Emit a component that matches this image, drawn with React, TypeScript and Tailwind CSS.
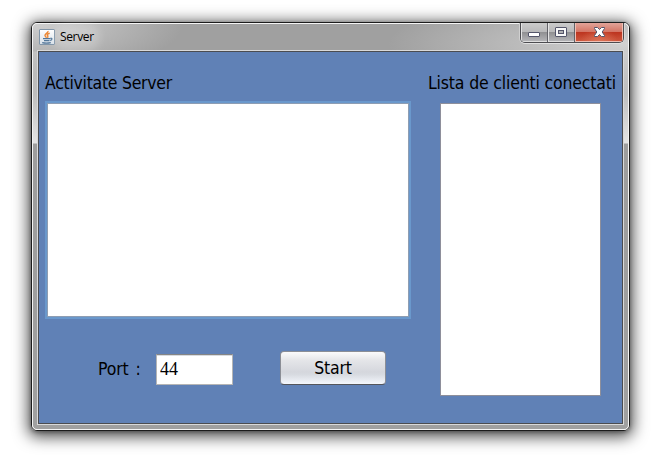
import React from "react";

const UI = "font-['DejaVu_Sans_Condensed','DejaVu_Sans',sans-serif] [font-stretch:condensed]";

function JavaIcon() {
  return (
    <svg width="16" height="16" viewBox="0 0 16 16" className="block shrink-0">
      <defs>
        <linearGradient id="tile" x1="0" y1="0" x2="0" y2="1">
          <stop offset="0" stopColor="#ffffff" />
          <stop offset="1" stopColor="#d7e0e9" />
        </linearGradient>
      </defs>
      <rect x=".5" y=".5" width="15" height="15" rx=".5" fill="url(#tile)" stroke="#8195a8" />
      <path d="M9 2C9.800 4 4.800 5 6.200 7.200L7.600 8.800M10.700 4.300C8 5 7.800 6 8.900 7L8.600 8.800" fill="none" stroke="#ed8733" strokeWidth="1.400" />
      <path d="M4 9.700h7.200M5 11.600h5.500M3.200 13.600c2.500.6 6 .6 8.600 0M11.300 9.300c2.200-.5 2.200 1.700-.1 2.300" fill="none" stroke="#54789a" strokeWidth="1.200" />
    </svg>
  );
}

function TitleButtons() {
  return (
    <div className="-mt-px flex h-[20px] w-[104px] overflow-hidden rounded-b-[5px] border border-t-0 border-[#4c4c50] shadow-[0_1px_0_#e2e2e2,1px_0_0_#d8d8d8,-1px_0_0_#d0d0d0]">
      <div className="flex w-[27px] items-start justify-center border-r border-[#626268] bg-[linear-gradient(#cbcbcb_0%,#b9b9ba_47%,#919193_50%,#b7b7ba_100%)] pt-[9px] shadow-[inset_1px_0_0_#e4e4e4,inset_0_-1px_0_#dedede]">
        <svg width="12" height="5" viewBox="0 0 12 5">
          <rect x=".5" y=".5" width="11" height="4" rx=".5" fill="#fff" stroke="#54556a" />
        </svg>
      </div>
      <div className="flex w-[27px] items-start justify-center border-r border-[#626268] bg-[linear-gradient(#cbcbcb_0%,#b9b9ba_47%,#919193_50%,#b7b7ba_100%)] pt-[4px] shadow-[inset_1px_0_0_#e4e4e4,inset_0_-1px_0_#dedede]">
        <svg width="12" height="10" viewBox="0 0 12 10">
          <rect x=".5" y=".5" width="11" height="9" rx=".5" fill="#f8f8f8" stroke="#54556a" />
          <rect x="3.500" y="3.500" width="5" height="3" fill="#b0b0b3" stroke="#54556a" />
        </svg>
      </div>
      <div className="flex flex-1 items-start justify-center bg-[radial-gradient(ellipse_at_50%_100%,#e88b6d99_0%,transparent_55%),linear-gradient(#e2a499_0%,#d47666_45%,#bd3520_50%,#cf5a40_100%)] pt-[4px] shadow-[inset_1px_0_0_#efc0b5,inset_-1px_0_0_#efc0b5,inset_0_-1px_0_#efc0b5]">
        <svg width="13" height="10" viewBox="0 0 13 10">
          <path d="M1.500 .5h3l2 2 2-2h3v1L9.200 5l2.300 3.500v1h-3l-2-2-2 2h-3v-1L3.800 5 1.500 1.500z" fill="#fff" stroke="#54556a" strokeLinejoin="round" />
        </svg>
      </div>
    </div>
  );
}

export default function App() {
  return (
    <div className="h-[459px] w-[665px] overflow-hidden bg-white pl-[31px] pt-[22px] text-black">
      <div className="h-[409px] w-[599px] rounded-[6px] border border-[#1c1c1c] shadow-[0_3px_15px_3px_rgba(0,0,0,0.68),0_1px_4px_rgba(0,0,0,0.35)]">
        <div className="flex h-full flex-col rounded-[5px] border border-[#f4f4f4] bg-[radial-gradient(ellipse_150px_50px_at_0_0,#cfcfcf_0%,#c4c4c400_100%),radial-gradient(ellipse_240px_50px_at_100%_20px,#d2d2d2_0%,#c4c4c400_100%),linear-gradient(#a0a0a0_0px,#a0a0a0_27px,#b8b8b8_28px,#bebebe_70px,#e4e4e4_119px,#9d9d9d_120px,#a0a0a0_100%)] px-1 pb-1">
          <header className="flex h-[26px] shrink-0 justify-between pl-[2px]">
            <div className="flex h-[26px] items-center gap-[5px]">
              <JavaIcon />
              <span className="rounded-full bg-white/20 font-['Open_Sans','Noto_Sans',sans-serif] text-[12px] leading-[16px] tracking-[-0.35px] shadow-[0_0_8px_6px_rgba(255,255,255,0.2)]">Server</span>
            </div>
            <TitleButtons />
          </header>
          <div className="min-h-0 flex-1 border border-[#d9d9d9]">
            <main className={`flex h-full border border-[#4b4c50] bg-[#6081b6] ${UI}`}>
              <section className="w-[389px] shrink-0 pl-[6px] pt-[19px]">
                <h1 className="h-[30px] whitespace-nowrap text-[17.500px] leading-[24px] tracking-[-0.280px]">Activitate Server</h1>
                <div className="h-[218px] w-[366px] border-2 border-[#6a98cc] bg-white">
                  <div className="h-full border border-[#8e9db2]" />
                </div>
                <div className="mt-[32px] flex">
                  <label htmlFor="port" className="ml-[53px] w-[58px] whitespace-nowrap pt-[6px] text-[17.500px] leading-[24px] tracking-[-0.150px] [word-spacing:2px]">Port :</label>
                  <input id="port" defaultValue="44" className="mt-[3px] h-[31px] w-[77px] border border-[#b5b5b5] border-t-[#858585] bg-white px-[3px] pb-0 font-['Liberation_Serif',serif] text-[18px] shadow-[inset_0_1px_0_#d8dbe0] outline-none" />
                  <button className="ml-[47px] h-[34px] w-[106px] rounded-[4px] border border-[#8b8e96] border-b-[#54565c] bg-[linear-gradient(#fbfbfc_0%,#e5e6e9_25%,#d5d7dd_62%,#d7dae0_70%,#f4f7fd_100%)] text-[17.500px] leading-[32px] tracking-[-0.150px]">Start</button>
                </div>
              </section>
              <section className="pt-[19px]">
                <h2 className="h-[32px] whitespace-nowrap text-[17.500px] leading-[24px] tracking-[-0.170px]">Lista de clienti conectati</h2>
                <div className="ml-[12px] h-[293px] w-[161px] border border-[#8e8f9b] bg-white" />
              </section>
            </main>
          </div>
        </div>
      </div>
    </div>
  );
}
